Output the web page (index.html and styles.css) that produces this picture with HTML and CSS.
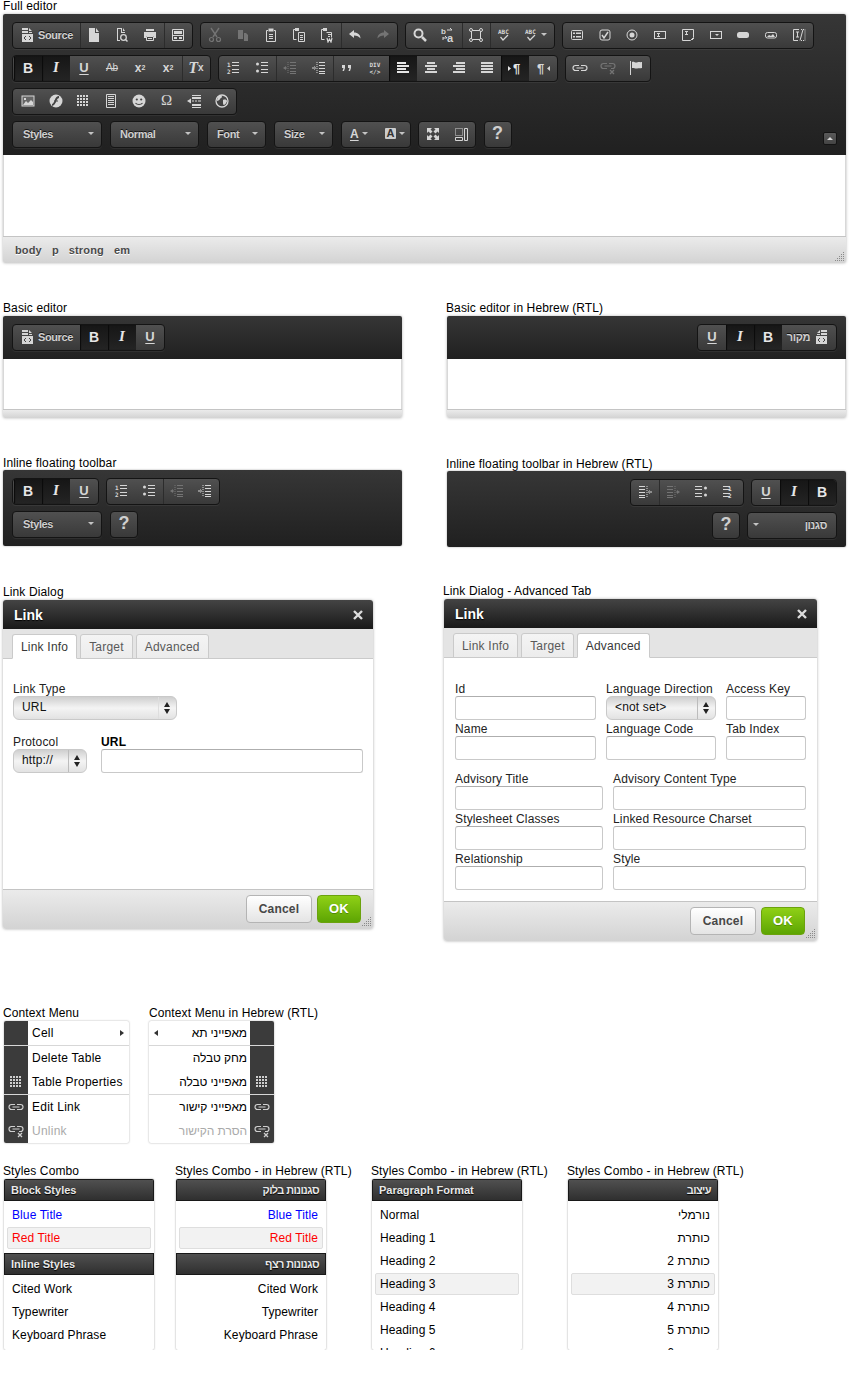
FILE: index.html
```
<!DOCTYPE html>
<html lang="en">
<head>
<meta charset="utf-8">
<title>Editor skin overview</title>
<link rel="stylesheet" href="styles.css">
</head>
<body>
<svg class="sprite" xmlns="http://www.w3.org/2000/svg">
  <symbol id="i-source" viewBox="0 0 16 16"><path d="M2 1h6v2H2zM2 4h6v2H2zM9 1l3 3H9zM9 5h3v1H9zM2 7h11v8H2z"/><path d="M6 9l-2 2 2 2M9 9l2 2-2 2" fill="none" stroke="#444"/></symbol>
  <symbol id="i-newpage" viewBox="0 0 16 16"><path d="M3 1h6v5h4v9H3zM10 1l3 4h-3z"/></symbol>
  <symbol id="i-preview" viewBox="0 0 16 16"><path d="M3 1h5v4h3v1H7V2H4v11h2v1H3zM9 1l2 3H9z"/><circle cx="9.5" cy="10.5" r="2.8" fill="none" stroke="currentColor" stroke-width="1.3"/><path d="M11.5 12.5l2 2" stroke="currentColor" stroke-width="1.5"/></symbol>
  <symbol id="i-print" viewBox="0 0 16 16"><path d="M4 2h8v2H4zM2 5h12v6h-2V9H4v2H2z"/><path d="M4.5 9.5h7v4h-7z" fill="none" stroke="currentColor"/><path d="M6 11.5h4" stroke="currentColor"/></symbol>
  <symbol id="i-templates" viewBox="0 0 16 16"><path d="M2.5 2.5h11v11h-11z" fill="none" stroke="currentColor"/><path d="M4 4h8v3H4zM2 8h12v1H2zM4 10h3v2H4zM9 10h3v2H9z"/></symbol>
  <symbol id="i-cut" viewBox="0 0 16 16"><path d="M4 1l6 9M12 1L6 10" fill="none" stroke="currentColor" stroke-width="1.4"/><circle cx="4.5" cy="12.5" r="2" fill="none" stroke="currentColor" stroke-width="1.2"/><circle cx="11.5" cy="12.5" r="2" fill="none" stroke="currentColor" stroke-width="1.2"/></symbol>
  <symbol id="i-copy" viewBox="0 0 16 16"><path d="M3 3h5v9H3zM9 6h2l2 2v6H9z"/></symbol>
  <symbol id="i-paste" viewBox="0 0 16 16"><path d="M5 3.5H3.5v11h9v-11H11" fill="none" stroke="currentColor"/><path d="M5.5 1.5h5v3h-5zM6 7h4v1H6zM6 9h4v1H6zM6 11h4v1H6z"/></symbol>
  <symbol id="i-pastetext" viewBox="0 0 16 16"><path d="M4 2.5H2.5v10h3" fill="none" stroke="currentColor"/><path d="M4 1h4v3H4z"/><path d="M7.5 5.5h6v9h-6z" fill="none" stroke="currentColor"/><path d="M9 8h3v1H9zM9 10h3v1H9zM9 12h3v1H9z"/></symbol>
  <symbol id="i-pasteword" viewBox="0 0 16 16"><path d="M4 2.5H2.5v10h3" fill="none" stroke="currentColor"/><path d="M4 1h4v3H4z"/><path d="M7.5 5.5h5v5" fill="none" stroke="currentColor"/><path d="M9 7h3v1H9zM9 9h2v1H9z"/><path d="M8 11l1 4 1.5-3 1.5 3 1-4" fill="none" stroke="currentColor" stroke-width="1.2"/></symbol>
  <symbol id="i-undo" viewBox="0 0 16 16"><path d="M7 3L2 7l5 4V8.500c3 0 5 1 6.500 3C13.500 8 11 5.500 7 5.500z"/></symbol>
  <symbol id="i-redo" viewBox="0 0 16 16"><path d="M9 3l5 4-5 4V8.500c-3 0-5 1-6.500 3C2.500 8 5 5.500 9 5.500z"/></symbol>
  <symbol id="i-find" viewBox="0 0 16 16"><circle cx="6.500" cy="6.500" r="4" fill="none" stroke="currentColor" stroke-width="2"/><path d="M10 10l4 4" stroke="currentColor" stroke-width="2.500"/></symbol>
  <symbol id="i-replace" viewBox="0 0 16 16"><text x="1" y="7" class="svgt" font-size="8">b</text><text x="7" y="15" class="svgt" font-size="11">a</text><path d="M7 3h5M10 1l2 2M3 11h4M5 9l2 2M3 10v3" fill="none" stroke="currentColor"/></symbol>
  <symbol id="i-selectall" viewBox="0 0 16 16"><path d="M3.500 3.500h9v9h-9z" fill="none" stroke="currentColor"/><g fill="#444" stroke="currentColor"><circle cx="3" cy="3" r="1.500"/><circle cx="13" cy="3" r="1.500"/><circle cx="3" cy="13" r="1.500"/><circle cx="13" cy="13" r="1.500"/></g></symbol>
  <symbol id="i-spell" viewBox="0 0 16 16"><text x="2" y="6.500" class="svgm" font-size="6">ABC</text><path d="M4.500 10l2.500 3 5-5" fill="none" stroke="currentColor" stroke-width="1.200"/></symbol>
  <symbol id="i-form" viewBox="0 0 16 16"><rect x="2.500" y="3.500" width="11" height="9" rx="1" fill="none" stroke="currentColor"/><path d="M4 5.500h2v1.500H4zM7 5.500h5v1.500H7zM4 9h2v1.500H4zM7 9h5v1.500H7z"/></symbol>
  <symbol id="i-check" viewBox="0 0 16 16"><rect x="3" y="3" width="10" height="10" rx="2" fill="none" stroke="currentColor"/><path d="M5 8l2 3 4-6" fill="none" stroke="currentColor" stroke-width="1.500"/></symbol>
  <symbol id="i-radio" viewBox="0 0 16 16"><circle cx="8" cy="8" r="5" fill="none" stroke="currentColor"/><circle cx="8" cy="8" r="2.500"/></symbol>
  <symbol id="i-tf" viewBox="0 0 16 16"><rect x="2.500" y="4.500" width="11" height="7" fill="none" stroke="currentColor"/><path d="M5 6.500h3M6.500 6.500v3M5 9.500h3" fill="none" stroke="currentColor"/></symbol>
  <symbol id="i-ta" viewBox="0 0 16 16"><path d="M2.500 2.500h11v8l-3 3h-8z" fill="none" stroke="currentColor"/><path d="M5 4.500h3M6.500 4.500v3M5 7.500h3M12 13l2-2" fill="none" stroke="currentColor"/></symbol>
  <symbol id="i-sel" viewBox="0 0 16 16"><rect x="2.500" y="4.500" width="11" height="7" fill="none" stroke="currentColor"/><path d="M7 7h4l-2 2z"/></symbol>
  <symbol id="i-btn" viewBox="0 0 16 16"><rect x="2" y="5" width="12" height="6" rx="2.500"/></symbol>
  <symbol id="i-imgbtn" viewBox="0 0 16 16"><rect x="2.500" y="5.500" width="11" height="5.500" rx="2" fill="none" stroke="currentColor"/><path d="M4 10l2-2 2 1 2-2 2 3z"/></symbol>
  <symbol id="i-hidden" viewBox="0 0 16 16"><path d="M8 2.500H2.500v11H7M5 5h3M6.500 5v5M5 10h3M9 13.500l3-11" fill="none" stroke="currentColor"/><path d="M10 2.500h4v11h-4" fill="none" stroke="currentColor" stroke-dasharray="1 1"/></symbol>
  <symbol id="i-ol" viewBox="0 0 16 16"><text x="2" y="7" class="svgm" font-size="6">1</text><text x="2" y="14" class="svgm" font-size="6">2</text><path d="M7 2h7v1H7zM7 5h7v1H7zM7 9h7v1H7zM7 12h7v1H7z"/></symbol>
  <symbol id="i-ol-r" viewBox="0 0 16 16"><text x="10.500" y="7" class="svgm" font-size="6">1</text><text x="10.500" y="14" class="svgm" font-size="6">2</text><path d="M2 2h7v1H2zM2 5h7v1H2zM2 9h7v1H2zM2 12h7v1H2z"/></symbol>
  <symbol id="i-ul" viewBox="0 0 16 16"><circle cx="3.500" cy="4" r="1.500"/><circle cx="3.500" cy="11" r="1.500"/><path d="M7 2h7v1H7zM7 5h7v1H7zM7 9h7v1H7zM7 12h7v1H7z"/></symbol>
  <symbol id="i-outdent" viewBox="0 0 16 16"><path d="M6 2v12" fill="none" stroke="currentColor" stroke-dasharray="1 1"/><path d="M2 7.500h3v1H2zM1 8l3-2v4zM8 2h6v1H8zM8 5h6v1H8zM8 8h6v1H8zM8 11h6v1H8zM8 13h6v1H8z"/></symbol>
  <symbol id="i-indent" viewBox="0 0 16 16"><path d="M6 2v12" fill="none" stroke="currentColor" stroke-dasharray="1 1"/><path d="M1 7.500h3v1H1zM5 8L3 6v4zM8 2h6v1H8zM8 5h6v1H8zM8 8h6v1H8zM8 11h6v1H8zM8 13h6v1H8z"/></symbol>
  <symbol id="i-quote" viewBox="0 0 16 16"><path d="M3 5h3v3l-1 3H3.500l1-3H3zM9 5h3v3l-1 3H9.500l1-3H9z"/></symbol>
  <symbol id="i-div" viewBox="0 0 16 16"><text x="2.500" y="7" class="svgm" font-size="6">DIV</text><text x="2.500" y="14" class="svgm" font-size="6">&lt;/&gt;</text></symbol>
  <symbol id="i-left" viewBox="0 0 16 16"><path d="M2 2h9v2H2zM2 5h12v2H2zM2 8h9v2H2zM2 11h12v2H2z"/></symbol>
  <symbol id="i-center" viewBox="0 0 16 16"><path d="M4 2h8v2H4zM2 5h12v2H2zM4 8h8v2H4zM2 11h12v2H2z"/></symbol>
  <symbol id="i-right" viewBox="0 0 16 16"><path d="M5 2h9v2H5zM2 5h12v2H2zM5 8h9v2H5zM2 11h12v2H2z"/></symbol>
  <symbol id="i-justify" viewBox="0 0 16 16"><path d="M2 2h12v2H2zM2 5h12v2H2zM2 8h12v2H2zM2 11h12v2H2z"/></symbol>
  <symbol id="i-ltr" viewBox="0 0 16 16"><path d="M1 6l3 2.500-3 2.500z"/><text x="6" y="13" class="svgt" font-size="13">¶</text></symbol>
  <symbol id="i-rtl" viewBox="0 0 16 16"><path d="M15 6l-3 2.500 3 2.500z"/><text x="2" y="13" class="svgt" font-size="13">¶</text></symbol>
  <symbol id="i-link" viewBox="0 0 16 16"><path d="M7 5.500H3.500a2.500 2.500 0 0 0 0 5H7M9 5.500h3.500a2.500 2.500 0 0 1 0 5H9M4.500 8h7" fill="none" stroke="currentColor" stroke-width="1.200"/></symbol>
  <symbol id="i-unlink" viewBox="0 0 16 16"><path d="M7 3.500H3.500a2.500 2.500 0 0 0 0 5H7M9 3.500h3.500a2.500 2.500 0 0 1 0 5H11M4.500 6h7" fill="none" stroke="currentColor" stroke-width="1.200"/><path d="M10 10l4 4M14 10l-4 4" stroke="currentColor" stroke-width="1.300"/></symbol>
  <symbol id="i-anchor" viewBox="0 0 16 16"><path d="M2 1h1v14H2zM4 2c2-1 3 1 5 .4s3 0 5-.4v6c-2 .4-3 0-5 .4S6 7.500 4 8z"/></symbol>
  <symbol id="i-image" viewBox="0 0 16 16"><rect x="2" y="3" width="12" height="10" fill="#666" stroke="currentColor"/><path d="M3 12l3-4 2 2 3-3 2 2v3zM4 5h2v2H4z"/></symbol>
  <symbol id="i-flash" viewBox="0 0 16 16"><circle cx="8" cy="8" r="6.500"/><path d="M11 4c-3 0-3 3-4 5s-2 3-3 3" fill="none" stroke="#444" stroke-width="1.800"/><path d="M6 8h4" stroke="#444"/></symbol>
  <symbol id="i-table" viewBox="0 0 16 16"><path d="M2 3h12M2 6h12M2 9h12M2 12h12" stroke="currentColor" stroke-width="2" stroke-dasharray="2 1"/></symbol>
  <symbol id="i-hr" viewBox="0 0 16 16"><path d="M3.500 1.500h9v13h-9z" fill="none" stroke="currentColor"/><path d="M5 3h6v1H5zM5 5h6v1H5zM5 7h6v1H5zM5 9h6v1H5zM5 11h6v1H5z"/></symbol>
  <symbol id="i-smiley" viewBox="0 0 16 16"><circle cx="8" cy="8" r="6.500"/><circle cx="5.800" cy="6.500" r="1.100" fill="#444"/><circle cx="10.200" cy="6.500" r="1.100" fill="#444"/><path d="M4.500 10c1.500 2 5.500 2 7 0" fill="none" stroke="#444" stroke-width="1.200"/></symbol>
  <symbol id="i-pagebreak" viewBox="0 0 16 16"><path d="M6 2h9v1H6zM6 4h9v2H6zM6 11h9v2H6zM6 14h9v1H6zM1 8l4-2.500v5zM6 7.500h2v1H6zM9 7.500h2v1H9zM12 7.500h3v1h-3z"/></symbol>
  <symbol id="i-iframe" viewBox="0 0 16 16"><circle cx="8" cy="8" r="6" fill="none" stroke="currentColor" stroke-width="1.300"/><path d="M5 3c2-1 3 0 3 1s-2 1-2 2-3 2-3 2 0-3 2-5zM9 7c2-1 4 0 4 1s-2 4-3 4-1-2-1-3z"/></symbol>
  <symbol id="i-max" viewBox="0 0 16 16"><path d="M2 2h5L5.500 3.500 7.500 5.500 5.500 7.500 3.500 5.500 2 7zM14 2v5l-1.500-1.500-2 2-2-2 2-2L9 2zM2 14V9l1.500 1.500 2-2 2 2-2 2L7 14zM14 14H9l1.500-1.500-2-2 2-2 2 2L14 9z"/></symbol>
  <symbol id="i-blocks" viewBox="0 0 16 16"><path d="M2.500 2.500h7v7h-7z" fill="none" stroke="currentColor" stroke-dasharray="1 1"/><path d="M2.500 11.500h7v3h-7zM11.500 2.500h3v12h-3z" fill="none" stroke="currentColor"/></symbol>
  <symbol id="i-grip" viewBox="0 0 12 12"><path d="M10 2h1v1h-1zM8 4h1v1H8zM10 4h1v1h-1zM6 6h1v1H6zM8 6h1v1H8zM10 6h1v1h-1zM4 8h1v1H4zM6 8h1v1H6zM8 8h1v1H8zM10 8h1v1h-1zM2 10h1v1H2zM4 10h1v1H4zM6 10h1v1H6zM8 10h1v1H8zM10 10h1v1h-1z"/></symbol>
  <symbol id="i-close" viewBox="0 0 16 16"><path d="M4 4l8 8M12 4l-8 8" stroke="currentColor" stroke-width="2.400"/></symbol>
</svg>

<main class="page">

  <section class="full">
    <p class="cap">Full editor</p>
    <div class="editor">
      <div class="toolbar toolbar-full">
        <div class="trow">
          <div class="tg">
            <a class="tb tb-src"><svg class="ic"><use href="#i-source"/></svg><span class="tb-label">Source</span></a>
            <a class="tb sep"><svg class="ic"><use href="#i-newpage"/></svg></a>
            <a class="tb"><svg class="ic"><use href="#i-preview"/></svg></a>
            <a class="tb"><svg class="ic"><use href="#i-print"/></svg></a>
            <a class="tb sep"><svg class="ic"><use href="#i-templates"/></svg></a>
          </div>
          <div class="tg">
            <a class="tb off"><svg class="ic"><use href="#i-cut"/></svg></a>
            <a class="tb off"><svg class="ic"><use href="#i-copy"/></svg></a>
            <a class="tb"><svg class="ic"><use href="#i-paste"/></svg></a>
            <a class="tb"><svg class="ic"><use href="#i-pastetext"/></svg></a>
            <a class="tb"><svg class="ic"><use href="#i-pasteword"/></svg></a>
            <a class="tb sep"><svg class="ic"><use href="#i-undo"/></svg></a>
            <a class="tb off"><svg class="ic"><use href="#i-redo"/></svg></a>
          </div>
          <div class="tg">
            <a class="tb"><svg class="ic"><use href="#i-find"/></svg></a>
            <a class="tb"><svg class="ic"><use href="#i-replace"/></svg></a>
            <a class="tb sep"><svg class="ic"><use href="#i-selectall"/></svg></a>
            <a class="tb sep"><svg class="ic"><use href="#i-spell"/></svg></a>
            <a class="tb tb-drop"><svg class="ic"><use href="#i-spell"/></svg><i class="caret"></i></a>
          </div>
          <div class="tg tg-tight">
            <a class="tb"><svg class="ic"><use href="#i-form"/></svg></a>
            <a class="tb"><svg class="ic"><use href="#i-check"/></svg></a>
            <a class="tb"><svg class="ic"><use href="#i-radio"/></svg></a>
            <a class="tb"><svg class="ic"><use href="#i-tf"/></svg></a>
            <a class="tb"><svg class="ic"><use href="#i-ta"/></svg></a>
            <a class="tb"><svg class="ic"><use href="#i-sel"/></svg></a>
            <a class="tb"><svg class="ic"><use href="#i-btn"/></svg></a>
            <a class="tb"><svg class="ic"><use href="#i-imgbtn"/></svg></a>
            <a class="tb"><svg class="ic"><use href="#i-hidden"/></svg></a>
          </div>
        </div>
        <div class="trow">
          <div class="tg">
            <a class="tb on t-b">B</a>
            <a class="tb on t-i">I</a>
            <a class="tb t-u">U</a>
            <a class="tb t-s">Ab</a>
            <a class="tb t-x">x<sub>2</sub></a>
            <a class="tb t-x">x<sup>2</sup></a>
            <a class="tb sep t-tx">T<sub>x</sub></a>
          </div>
          <div class="tg">
            <a class="tb"><svg class="ic"><use href="#i-ol"/></svg></a>
            <a class="tb tb-wide"><svg class="ic"><use href="#i-ul"/></svg></a>
            <a class="tb off sep"><svg class="ic"><use href="#i-outdent"/></svg></a>
            <a class="tb tb-wide"><svg class="ic"><use href="#i-indent"/></svg></a>
            <a class="tb sep"><svg class="ic"><use href="#i-quote"/></svg></a>
            <a class="tb"><svg class="ic"><use href="#i-div"/></svg></a>
            <a class="tb on"><svg class="ic"><use href="#i-left"/></svg></a>
            <a class="tb"><svg class="ic"><use href="#i-center"/></svg></a>
            <a class="tb"><svg class="ic"><use href="#i-right"/></svg></a>
            <a class="tb"><svg class="ic"><use href="#i-justify"/></svg></a>
            <a class="tb on"><svg class="ic"><use href="#i-ltr"/></svg></a>
            <a class="tb"><svg class="ic"><use href="#i-rtl"/></svg></a>
          </div>
          <div class="tg">
            <a class="tb"><svg class="ic"><use href="#i-link"/></svg></a>
            <a class="tb off"><svg class="ic"><use href="#i-unlink"/></svg></a>
            <a class="tb"><svg class="ic"><use href="#i-anchor"/></svg></a>
          </div>
        </div>
        <div class="trow">
          <div class="tg tg-tight">
            <a class="tb"><svg class="ic"><use href="#i-image"/></svg></a>
            <a class="tb"><svg class="ic"><use href="#i-flash"/></svg></a>
            <a class="tb"><svg class="ic"><use href="#i-table"/></svg></a>
            <a class="tb"><svg class="ic"><use href="#i-hr"/></svg></a>
            <a class="tb"><svg class="ic"><use href="#i-smiley"/></svg></a>
            <a class="tb t-omega">Ω</a>
            <a class="tb"><svg class="ic"><use href="#i-pagebreak"/></svg></a>
            <a class="tb"><svg class="ic"><use href="#i-iframe"/></svg></a>
          </div>
        </div>
        <div class="trow trow-wide">
          <div class="tg combo combo-l"><span class="tb-label">Styles</span><i class="caret"></i></div>
          <div class="tg combo combo-l"><span class="tb-label">Normal</span><i class="caret"></i></div>
          <div class="tg combo combo-s"><span class="tb-label">Font</span><i class="caret"></i></div>
          <div class="tg combo combo-s"><span class="tb-label">Size</span><i class="caret"></i></div>
          <div class="tg tg-colors">
            <a class="tb tb-color"><span class="t-a">A</span><i class="caret"></i></a>
            <a class="tb tb-color tb-color-bg"><span class="t-a-box">A</span><i class="caret"></i></a>
          </div>
          <div class="tg tg-tight">
            <a class="tb"><svg class="ic"><use href="#i-max"/></svg></a>
            <a class="tb"><svg class="ic"><use href="#i-blocks"/></svg></a>
          </div>
          <div class="tg"><a class="tb t-help">?</a></div>
          <a class="collapse"><i class="caret caret-up"></i></a>
        </div>
      </div>
      <div class="edit-area edit-area-full"></div>
      <div class="path-bar">
        <span class="crumb">body</span><span class="crumb">p</span><span class="crumb">strong</span><span class="crumb">em</span>
        <svg class="grip"><use href="#i-grip"/></svg>
      </div>
    </div>
  </section>

  <section class="pair pair-basic">
    <div class="half">
      <p class="cap">Basic editor</p>
      <div class="editor">
        <div class="toolbar">
          <div class="trow">
            <div class="tg">
              <a class="tb tb-src"><svg class="ic"><use href="#i-source"/></svg><span class="tb-label">Source</span></a>
              <a class="tb on t-b">B</a>
              <a class="tb on t-i">I</a>
              <a class="tb t-u">U</a>
            </div>
          </div>
        </div>
        <div class="edit-area edit-area-basic"></div>
        <div class="thin-bar"></div>
      </div>
    </div>
    <div class="half" dir="rtl">
      <p class="cap cap-ltr" dir="ltr">Basic editor in Hebrew (RTL)</p>
      <div class="editor">
        <div class="toolbar">
          <div class="trow">
            <div class="tg">
              <a class="tb tb-src tb-src-he"><svg class="ic flip"><use href="#i-source"/></svg><span class="tb-label">מקור</span></a>
              <a class="tb on t-b">B</a>
              <a class="tb on t-i">I</a>
              <a class="tb t-u">U</a>
            </div>
          </div>
        </div>
        <div class="edit-area edit-area-basic"></div>
        <div class="thin-bar"></div>
      </div>
    </div>
  </section>

  <section class="pair pair-inline">
    <div class="half">
      <p class="cap">Inline floating toolbar</p>
      <div class="toolbar toolbar-solo">
        <div class="trow">
          <div class="tg">
            <a class="tb on t-b">B</a>
            <a class="tb on t-i">I</a>
            <a class="tb t-u">U</a>
          </div>
          <div class="tg">
            <a class="tb"><svg class="ic"><use href="#i-ol"/></svg></a>
            <a class="tb"><svg class="ic"><use href="#i-ul"/></svg></a>
            <a class="tb off sep"><svg class="ic"><use href="#i-outdent"/></svg></a>
            <a class="tb"><svg class="ic"><use href="#i-indent"/></svg></a>
          </div>
        </div>
        <div class="trow trow-wide">
          <div class="tg combo combo-l"><span class="tb-label">Styles</span><i class="caret"></i></div>
          <div class="tg"><a class="tb t-help">?</a></div>
        </div>
      </div>
    </div>
    <div class="half half-low" dir="rtl">
      <p class="cap cap-ltr" dir="ltr">Inline floating toolbar in Hebrew (RTL)</p>
      <div class="toolbar toolbar-solo">
        <div class="trow">
          <div class="tg">
            <a class="tb on t-b">B</a>
            <a class="tb on t-i">I</a>
            <a class="tb t-u">U</a>
          </div>
          <div class="tg">
            <a class="tb"><svg class="ic"><use href="#i-ol-r"/></svg></a>
            <a class="tb"><svg class="ic flip"><use href="#i-ul"/></svg></a>
            <a class="tb off sep"><svg class="ic flip"><use href="#i-outdent"/></svg></a>
            <a class="tb"><svg class="ic flip"><use href="#i-indent"/></svg></a>
          </div>
        </div>
        <div class="trow trow-wide">
          <div class="tg combo combo-l"><span class="tb-label">סגנון</span><i class="caret"></i></div>
          <div class="tg"><a class="tb t-help">?</a></div>
        </div>
      </div>
    </div>
  </section>

  <section class="pair pair-dialogs">
    <div class="half-dialog half-low">
      <p class="cap">Link Dialog</p>
      <div class="dialog dialog-a">
        <div class="dlg-title"><span>Link</span><svg class="dlg-x"><use href="#i-close"/></svg></div>
        <div class="tabs">
          <span class="tab tab-on">Link Info</span><span class="tab">Target</span><span class="tab">Advanced</span>
        </div>
        <div class="dlg-body dlg-body-a">
          <label class="fld">
            <span class="lbl">Link Type</span>
            <span class="sel sel-type"><span class="sel-text">URL</span><i class="sel-arrows sel-arrows-plain"></i></span>
          </label>
          <div class="url-row">
            <label class="fld fld-proto">
              <span class="lbl">Protocol</span>
              <span class="sel"><span class="sel-text">http://</span><i class="sel-arrows"></i></span>
            </label>
            <label class="fld fld-url">
              <span class="lbl lbl-b">URL</span>
              <span class="inp"></span>
            </label>
          </div>
        </div>
        <div class="dlg-foot">
          <a class="btn btn-cancel">Cancel</a><a class="btn btn-ok">OK</a>
          <svg class="grip grip-dlg"><use href="#i-grip"/></svg>
        </div>
      </div>
    </div>
    <div class="half-dialog">
      <p class="cap cap-ltr">Link Dialog - Advanced Tab</p>
      <div class="dialog dialog-b">
        <div class="dlg-title"><span>Link</span><svg class="dlg-x"><use href="#i-close"/></svg></div>
        <div class="tabs">
          <span class="tab">Link Info</span><span class="tab">Target</span><span class="tab tab-on">Advanced</span>
        </div>
        <div class="dlg-body dlg-body-b">
          <div class="fgrid fgrid-3">
            <label class="fld"><span class="lbl">Id</span><span class="inp"></span></label>
            <label class="fld"><span class="lbl">Language Direction</span><span class="sel"><span class="sel-text">&lt;not set&gt;</span><i class="sel-arrows"></i></span></label>
            <label class="fld"><span class="lbl">Access Key</span><span class="inp"></span></label>
            <label class="fld"><span class="lbl">Name</span><span class="inp"></span></label>
            <label class="fld"><span class="lbl">Language Code</span><span class="inp"></span></label>
            <label class="fld"><span class="lbl">Tab Index</span><span class="inp"></span></label>
          </div>
          <div class="fgrid fgrid-2">
            <label class="fld"><span class="lbl">Advisory Title</span><span class="inp"></span></label>
            <label class="fld"><span class="lbl">Advisory Content Type</span><span class="inp"></span></label>
            <label class="fld"><span class="lbl">Stylesheet Classes</span><span class="inp"></span></label>
            <label class="fld"><span class="lbl">Linked Resource Charset</span><span class="inp"></span></label>
            <label class="fld"><span class="lbl">Relationship</span><span class="inp"></span></label>
            <label class="fld"><span class="lbl">Style</span><span class="inp"></span></label>
          </div>
        </div>
        <div class="dlg-foot">
          <a class="btn btn-cancel">Cancel</a><a class="btn btn-ok">OK</a>
          <svg class="grip grip-dlg"><use href="#i-grip"/></svg>
        </div>
      </div>
    </div>
  </section>

  <section class="menus">
    <div class="menu-col">
      <p class="cap">Context Menu</p>
      <div class="menu">
        <div class="mi"><span class="mi-ic"></span><span class="mi-t">Cell</span><i class="tri tri-r"></i></div>
        <div class="msep"></div>
        <div class="mi"><span class="mi-ic"></span><span class="mi-t">Delete Table</span></div>
        <div class="mi"><span class="mi-ic"><svg class="ic"><use href="#i-table"/></svg></span><span class="mi-t">Table Properties</span></div>
        <div class="msep"></div>
        <div class="mi"><span class="mi-ic"><svg class="ic"><use href="#i-link"/></svg></span><span class="mi-t">Edit Link</span></div>
        <div class="mi mi-off"><span class="mi-ic"><svg class="ic"><use href="#i-unlink"/></svg></span><span class="mi-t">Unlink</span></div>
      </div>
    </div>
    <div class="menu-col">
      <p class="cap">Context Menu in Hebrew (RTL)</p>
      <div class="menu" dir="rtl">
        <div class="mi"><span class="mi-ic"></span><span class="mi-t">מאפייני תא</span><i class="tri tri-l"></i></div>
        <div class="msep"></div>
        <div class="mi"><span class="mi-ic"></span><span class="mi-t">מחק טבלה</span></div>
        <div class="mi"><span class="mi-ic"><svg class="ic"><use href="#i-table"/></svg></span><span class="mi-t">מאפייני טבלה</span></div>
        <div class="msep"></div>
        <div class="mi"><span class="mi-ic"><svg class="ic"><use href="#i-link"/></svg></span><span class="mi-t">מאפייני קישור</span></div>
        <div class="mi mi-off"><span class="mi-ic"><svg class="ic"><use href="#i-unlink"/></svg></span><span class="mi-t">הסרת הקישור</span></div>
      </div>
    </div>
  </section>

  <section class="combos">
    <div class="combo-col">
      <p class="cap">Styles Combo</p>
      <div class="panel">
        <h3 class="p-title">Block Styles</h3>
        <ul class="p-list">
          <li class="p-item c-blue">Blue Title</li>
          <li class="p-item p-hi c-red">Red Title</li>
        </ul>
        <h3 class="p-title">Inline Styles</h3>
        <ul class="p-list">
          <li class="p-item">Cited Work</li>
          <li class="p-item">Typewriter</li>
          <li class="p-item">Keyboard Phrase</li>
        </ul>
      </div>
    </div>
    <div class="combo-col">
      <p class="cap">Styles Combo - in Hebrew (RTL)</p>
      <div class="panel" dir="rtl">
        <h3 class="p-title">סגנונות בלוק</h3>
        <ul class="p-list">
          <li class="p-item c-blue">Blue Title</li>
          <li class="p-item p-hi c-red">Red Title</li>
        </ul>
        <h3 class="p-title">סגנונות רצף</h3>
        <ul class="p-list">
          <li class="p-item">Cited Work</li>
          <li class="p-item">Typewriter</li>
          <li class="p-item">Keyboard Phrase</li>
        </ul>
      </div>
    </div>
    <div class="combo-col">
      <p class="cap">Styles Combo - in Hebrew (RTL)</p>
      <div class="panel">
        <h3 class="p-title">Paragraph Format</h3>
        <ul class="p-list">
          <li class="p-item">Normal</li>
          <li class="p-item">Heading 1</li>
          <li class="p-item">Heading 2</li>
          <li class="p-item p-hi">Heading 3</li>
          <li class="p-item">Heading 4</li>
          <li class="p-item">Heading 5</li>
          <li class="p-item">Heading 6</li>
        </ul>
      </div>
    </div>
    <div class="combo-col">
      <p class="cap">Styles Combo - in Hebrew (RTL)</p>
      <div class="panel" dir="rtl">
        <h3 class="p-title">עיצוב</h3>
        <ul class="p-list">
          <li class="p-item">נורמלי</li>
          <li class="p-item">כותרת</li>
          <li class="p-item">כותרת 2</li>
          <li class="p-item p-hi">כותרת 3</li>
          <li class="p-item">כותרת 4</li>
          <li class="p-item">כותרת 5</li>
          <li class="p-item">כותרת 6</li>
        </ul>
      </div>
    </div>
  </section>

</main>
</body>
</html>
```

FILE: styles.css
```
* { box-sizing: border-box; }
html, body { margin: 0; padding: 0; background: #fff; }
body { font-family: "Liberation Sans", Arial, sans-serif; font-size: 12px; color: #000; }
a { color: inherit; text-decoration: none; }
i { font-style: normal; }
.sprite { display: none; }
.svgt { font-family: "Liberation Sans", sans-serif; font-weight: bold; }
.svgm { font-family: "DejaVu Sans Mono", monospace; font-weight: bold; }

.page { width: 850px; }
.cap { margin: 0 0 1px; height: 13px; line-height: 13px; font-size: 12px; letter-spacing: .12px; color: #000; white-space: nowrap; }
.cap-ltr { text-align: left; margin-left: -1px; }

/* sections */
.full { margin-left: 3px; width: 843px; }
.pair { display: flex; padding-left: 3px; }
.half { width: 399px; margin-right: 45px; }
.half:last-child { margin-right: 0; }
.half-low { margin-top: 1px; }
.pair-basic { margin-top: 39px; }
.pair-inline { margin-top: 38px; }
.pair-inline .cap { margin-top: 1px; margin-bottom: 0; }
.pair-dialogs { margin-top: 38px; }
.half-dialog:first-child { width: 370px; margin-right: 71px; }
.half-dialog:last-child { width: 373px; }

/* editor */
.editor { box-shadow: 0 0 3px rgba(0, 0, 0, .3); border-radius: 2px; background: #fff; }
.toolbar { background: linear-gradient(#363636, #202020); border-radius: 2px 2px 0 0; padding: 8px 9px 8px 9px; display: flex; flex-direction: column; gap: 6px; height: 43px; }
.toolbar-full { height: 141px; }
.toolbar-solo { height: 76px; border-radius: 2px; box-shadow: 0 0 2px rgba(0, 0, 0, .4); }
.trow { display: flex; gap: 7px; height: 27px; }
.trow-wide { gap: 8px; }
[dir="rtl"] .trow-wide { gap: 7px; }
.edit-area { background: #fff; border-left: 1px solid #d8d8d8; border-right: 1px solid #d8d8d8; }
.edit-area-full { height: 81px; }
.edit-area-basic { height: 50px; }
.path-bar { position: relative; height: 27px; display: flex; align-items: center; padding-left: 12px; border-top: 1px solid #c4c4c4; background: linear-gradient(#ebebeb, #d3d3d3); border-radius: 0 0 2px 2px; }
.thin-bar { height: 9px; border-top: 1px solid #c4c4c4; background: linear-gradient(#ebebeb, #d3d3d3); border-radius: 0 0 2px 2px; }
.crumb { font-size: 11px; font-weight: bold; letter-spacing: .15px; color: #4a4a4a; text-shadow: 0 1px 0 #fff; margin-right: 10px; }
.grip { position: absolute; right: 1px; bottom: 1px; width: 12px; height: 12px; fill: #8a8a8a; }

/* toolbar groups */
.tg { display: flex; flex: none; height: 27px; border: 1px solid #141414; border-radius: 4px; overflow: hidden; background: linear-gradient(#505050, #393939); box-shadow: 0 1px 0 rgba(255, 255, 255, .06); color: #d9d9d9; }
.trow > .tg:first-child { padding-left: 1px; }
[dir="rtl"] .trow > .tg:first-child { padding-left: 0; }
.tb { display: flex; align-items: center; justify-content: center; flex: none; width: 28px; height: 25px; padding-bottom: 2px; color: #d6d6d6; }
.tg-tight .tb { width: 27.75px; }
.tb-wide { width: 29px; }
.tb.on { background: linear-gradient(#161616, #242424); color: #e6e6e6; box-shadow: inset 1px 0 1px #0a0a0a; }
.tb.off { color: #747474; }
.sep { box-shadow: inset 1px 0 0 #2c2c2c; }
.ic { width: 16px; height: 16px; fill: currentColor; display: block; }
.flip { transform: scaleX(-1); }
.tb-src { width: 66px; justify-content: flex-start; padding-inline-start: 6px; gap: 2px; }
.tb-src-he { width: 54px; padding-inline-start: 7px; gap: 3px; }
.tb-label { font-size: 11px; font-weight: bold; color: #cfcfcf; text-shadow: 0 -1px 0 rgba(0, 0, 0, .75); letter-spacing: -.4px; }
.tb-drop { width: 36px; justify-content: flex-start; padding-left: 5px; gap: 2px; }
.caret { display: block; width: 0; height: 0; flex: none; border-left: 3px solid transparent; border-right: 3px solid transparent; border-top: 3px solid #c4c4c4; }
.caret-up { border-top: 0; border-bottom: 3px solid #d6d6d6; }

.t-b { font-size: 14px; font-weight: bold; }
.t-i { font-family: "Liberation Serif", serif; font-size: 15px; font-style: italic; font-weight: bold; }
.t-u { font-size: 13px; font-weight: bold; text-decoration: underline; text-underline-offset: 2px; }
.t-s { font-size: 10px; text-decoration: line-through; }
.t-x { font-size: 12px; font-weight: bold; }
.t-x sub, .t-x sup { font-size: 7px; }
.t-tx { font-family: "Liberation Serif", serif; font-size: 16px; font-style: italic; font-weight: bold; }
.t-tx sub { font-size: 10px; font-family: "Liberation Sans", sans-serif; font-style: normal; }
.t-omega { font-family: "Liberation Serif", serif; font-size: 15px; }
.tb.t-help { width: 26px; font-size: 18px; font-weight: bold; color: #cfcfcf; }

.combo { align-items: center; justify-content: space-between; padding: 0 7px 2px 9px; }
.combo-l { width: 89px; }
.trow > .combo-l:first-child { width: 90px; padding-left: 10px; }
[dir="rtl"] .combo { padding: 0 9px 2px 6px; }
[dir="rtl"] .trow > .combo-l:first-child { padding-left: 5px; }
.combo-s { width: 59px; }
.tg-colors { width: 70px; margin-right: -1px; }
.tb-color { width: 36px; justify-content: flex-start; padding-left: 8px; gap: 3px; }
.tb-color-bg { width: 32px; padding-left: 7px; }
.t-a { font-size: 12px; font-weight: bold; text-decoration: underline; text-underline-offset: 2px; }
.t-a-box { width: 11px; height: 11px; line-height: 11px; text-align: center; font-size: 11px; font-weight: bold; color: #333; background: #ccc; border-radius: 1px; }
.collapse { display: flex; align-items: center; justify-content: center; margin-inline-start: auto; align-self: flex-end; margin-bottom: 3px; width: 14px; height: 13px; border: 1px solid #141414; border-radius: 2px; background: linear-gradient(#5a5a5a, #444); }

/* dialogs */
.dialog { position: relative; border-radius: 3px; box-shadow: 0 0 3px rgba(0, 0, 0, .35); background: #fff; overflow: hidden; }
.dlg-title { height: 29px; display: flex; align-items: center; justify-content: space-between; padding: 0 7px 0 11px; background: linear-gradient(#444, #191919); color: #fff; font-size: 14px; font-weight: bold; text-shadow: 0 1px 1px #000; }
.dlg-x { width: 16px; height: 16px; color: #ddd; }
.tabs { display: flex; gap: 3px; align-items: flex-end; height: 30px; padding-left: 9px; background: #e4e4e4; border-bottom: 1px solid #cacaca; }
.tab { height: 25px; line-height: 24px; padding: 0 8px; margin-bottom: -1px; border: 1px solid #cacaca; border-bottom: 1px solid #cacaca; border-radius: 3px 3px 0 0; background: linear-gradient(#f4f4f4, #ececec); color: #595959; font-size: 12px; letter-spacing: .2px; }
.tab-on { background: #fff; border-bottom-color: #fff; color: #383838; }
.dlg-body-a { height: 230px; padding: 23px 10px 0; }
.dlg-body-b { height: 243px; padding: 24px 11px 0; }
.fld { display: block; }
.lbl { display: block; height: 14px; line-height: 14px; font-size: 12px; letter-spacing: .15px; color: #222; white-space: nowrap; }
.lbl-b { font-weight: bold; color: #000; }
.inp { display: block; height: 24px; background: #fff; border: 1px solid #c9c9c9; border-top-color: #aeaeae; border-radius: 3px; }
.sel { display: flex; height: 24px; align-items: center; justify-content: space-between; border: 1px solid #c9c9c9; border-radius: 6px; background: linear-gradient(#cfcfcf, #f4f4f4 50%, #e2e2e2); font-size: 12px; }
.sel-type { width: 164px; }
.sel-text { padding-left: 8px; margin-top: -3px; color: #111; letter-spacing: .15px; }
.sel-arrows { position: relative; display: block; width: 18px; height: 22px; border-left: 1px solid #bcbcbc; }
.sel-arrows-plain { border-left-color: #dedede; }
.sel-arrows::before, .sel-arrows::after { content: ""; position: absolute; left: 5px; width: 0; height: 0; border-left: 3.5px solid transparent; border-right: 3.5px solid transparent; }
.sel-arrows::before { top: 5px; border-bottom: 5px solid #222; }
.sel-arrows::after { top: 12px; border-top: 5px solid #222; }
.url-row { display: flex; gap: 14px; margin-top: 15px; }
.fld-proto { width: 74px; flex: none; }
.fld-url { flex: 1; }
.fgrid { display: grid; row-gap: 2px; column-gap: 10px; }
.fgrid-3 { grid-template-columns: 141px 110px 80px; }
.fgrid-2 { grid-template-columns: 148px 193px; margin-top: 12px; }
.dlg-foot { position: relative; height: 40px; display: flex; justify-content: flex-end; gap: 5px; padding: 5px 12px 0 0; border-top: 1px solid #c4c4c4; background: linear-gradient(#ebebeb, #d3d3d3); }
.btn { height: 28px; line-height: 26px; text-align: center; border-radius: 4px; font-size: 12px; font-weight: bold; letter-spacing: .2px; }
.btn-cancel { width: 66px; border: 1px solid #b4b4b4; background: linear-gradient(#fff, #e4e4e4); color: #474747; }
.btn-ok { width: 44px; border: 1px solid #6ba20d; background: linear-gradient(#8fd016, #5da503); color: #fff; font-size: 13px; text-shadow: 0 1px 0 rgba(0, 0, 0, .25); }
.grip-dlg { right: 1px; bottom: 2px; }

/* menus */
.menus { display: flex; margin-top: 66px; padding-left: 3px; }
.menu-col { width: 146px; }
.menu { width: 125px; margin-left: 1px; border-radius: 2px; overflow: hidden; box-shadow: 0 0 2px rgba(0, 0, 0, .35); background: #fff; }
.menu-col + .menu-col .menu { margin-left: 0; }
.mi { display: flex; align-items: center; height: 24px; }
.mi-ic { flex: none; align-self: stretch; width: 24px; display: flex; align-items: center; justify-content: center; background: #3b3b3b; color: #cfcfcf; }
.mi-t { margin-inline-start: 4px; white-space: nowrap; font-size: 12px; letter-spacing: .25px; }
[dir="rtl"] .mi-t { margin-inline-start: 3px; letter-spacing: -.1px; }
.mi-off .mi-t { color: #aaa; }
.msep { height: 1px; background: #d7d7d7; }
.tri { display: block; width: 0; height: 0; margin-inline-start: auto; margin-inline-end: 5px; border-top: 3px solid transparent; border-bottom: 3px solid transparent; }
.tri-r { border-left: 4px solid #333; }
.tri-l { border-right: 4px solid #333; }

/* combos */
.combos { display: flex; margin-top: 22px; padding-left: 3px; }
.combo-col { width: 196px; }
.combo-col:first-child { width: 172px; }
.panel { width: 150px; height: 171px; margin-left: 1px; overflow: hidden; border-radius: 2px; background: #fff; box-shadow: 0 0 2px rgba(0, 0, 0, .4); }
.p-title { margin: 0; height: 22px; line-height: 20px; padding: 0 6px; border: 1px solid #181818; background: linear-gradient(#505050, #2f2f2f); color: #e8e8e8; font-size: 11px; font-weight: bold; text-shadow: 0 1px 1px #000; }
[dir="rtl"] .p-title { letter-spacing: -.6px; }
.p-list { list-style: none; margin: 0; padding: 3px 3px 3px; }
.p-item { height: 22px; line-height: 20px; margin-bottom: 1px; padding: 0 4px; border: 1px solid transparent; border-radius: 2px; font-size: 12px; letter-spacing: .1px; white-space: nowrap; }
.p-hi { background: #f2f2f2; border-color: #dedede; }
.c-blue { color: #00f; }
.c-red { color: #f00; }
```
